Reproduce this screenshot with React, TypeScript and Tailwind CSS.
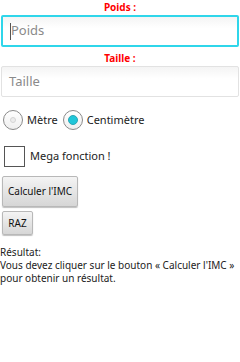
import React from "react";

function Radio({ checked, label }: { checked: boolean; label: string }) {
  return (
    <div className="flex items-center">
      <div className="w-[20px] h-[20px] rounded-full border border-[#8a8a8a] bg-[linear-gradient(#ffffff,#efefef)] flex items-center justify-center">
        {checked ? (
          <div className="w-[10px] h-[10px] rounded-full bg-[#1fc6d9] border border-[#2aa7b5]" />
        ) : (
          <div className="w-[6px] h-[6px] rounded-full bg-[#ececec] border border-[#d4d4d4]" />
        )}
      </div>
      <span className="ml-[4px] text-[11px] text-[#222]">{label}</span>
    </div>
  );
}

function Btn({ label, className }: { label: string; className: string }) {
  return (
    <div
      className={`flex items-center justify-center rounded-[2px] border border-[#b8b8b8] bg-[linear-gradient(#f4f4f4,#d6d6d6)] shadow-[0_1px_1px_rgba(0,0,0,0.25)] text-[10px] text-[#111] ${className}`}
    >
      {label}
    </div>
  );
}

export default function App() {
  return (
    <div
      className="w-[240px] h-[362px] bg-white overflow-hidden"
      style={{ fontFamily: '"Noto Sans", "Open Sans", sans-serif' }}
    >
      <div className="h-[15px] pt-[1px] text-center text-[10px] leading-[12px] font-bold text-[#ff0000]">
        Poids :
      </div>
      <div className="mx-[1px] h-[32px] border-2 border-[#2fd6ea] rounded-[2px] bg-[linear-gradient(#f4f4f4,#ffffff_40%)] flex items-center pl-[7px]">
        <div className="w-[1px] h-[17px] bg-[#555]" />
        <span className="text-[13px] text-[#8a8a8a]">Poids</span>
      </div>
      <div className="h-[19px] pt-[5px] text-center text-[10px] leading-[12px] font-bold text-[#ff0000]">
        Taille :
      </div>
      <div className="mx-[1px] h-[31px] border border-[#e2e2e2] rounded-[2px] bg-[linear-gradient(#f4f4f4,#ffffff_40%)] flex items-center pl-[7px]">
        <span className="text-[13px] text-[#8a8a8a]">Taille</span>
      </div>
      <div className="flex items-center mt-[13px] pl-[3px] gap-[5px]">
        <Radio checked={false} label="Mètre" />
        <Radio checked={true} label="Centimètre" />
      </div>
      <div className="flex items-center mt-[16px] pl-[4px]">
        <div className="w-[21px] h-[21px] border border-[#555] bg-white" />
        <span className="ml-[5px] text-[11px] text-[#222]">Mega fonction !</span>
      </div>
      <div className="pl-[2px] mt-[9px] flex flex-col items-start">
        <Btn label="Calculer l'IMC" className="w-[76px] h-[31px]" />
        <Btn label="RAZ" className="w-[31px] h-[24px] mt-[4px]" />
      </div>
      <div className="mt-[11px] text-[10px] leading-[13px] text-[#222]">
        <div>Résultat:</div>
        <div>Vous devez cliquer sur le bouton « Calculer l'IMC » pour obtenir un résultat.</div>
      </div>
    </div>
  );
}
